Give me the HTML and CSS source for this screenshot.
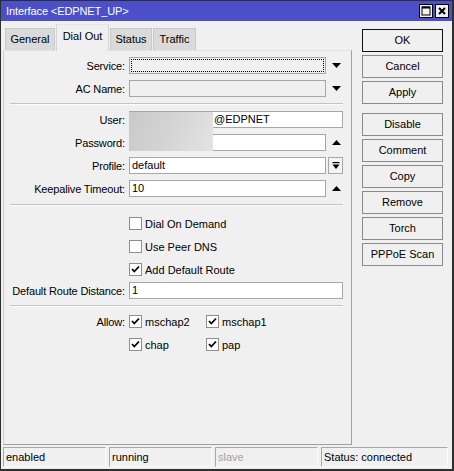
FILE: index.html
```html
<!DOCTYPE html>
<html>
<head>
<meta charset="utf-8">
<link rel="stylesheet" href="styles.css">
</head>
<body>
<div class="window">
  <div class="titlebar">
    <span class="title">Interface &lt;EDPNET_UP&gt;</span>
    <div class="tbtns">
      <span class="tbtn"><svg width="12" height="12" viewBox="0 0 12 12"><rect x="2" y="2" width="8" height="8" fill="none" stroke="#000" stroke-width="1"/><line x1="2" y1="2.5" x2="10" y2="2.5" stroke="#000" stroke-width="2"/></svg></span>
      <span class="tbtn"><svg width="12" height="12" viewBox="0 0 12 12"><path d="M3 3 L9 9 M9 3 L3 9" stroke="#000" stroke-width="2"/></svg></span>
    </div>
  </div>
  <div class="main">
    <div class="left">
      <div class="tabs">
        <div class="tab t-general">General</div>
        <div class="tab t-dial active">Dial Out</div>
        <div class="tab t-status">Status</div>
        <div class="tab t-traffic">Traffic</div>
      </div>
      <div class="panel">
        <div class="row">
          <span class="label">Service:</span>
          <div class="field"><div class="input disabled focus"></div><span class="icon"><svg width="9" height="5" viewBox="0 0 9 5"><path d="M0 0 H9 L4.5 5 Z" fill="#000"/></svg></span></div>
        </div>
        <div class="row">
          <span class="label">AC Name:</span>
          <div class="field"><div class="input disabled"></div><span class="icon"><svg width="9" height="5" viewBox="0 0 9 5"><path d="M0 0 H9 L4.5 5 Z" fill="#000"/></svg></span></div>
        </div>
        <div class="sep"></div>
        <div class="row">
          <span class="label">User:</span>
          <div class="field"><div class="input"><span class="hidden-part"></span>@EDPNET</div></div>
        </div>
        <div class="row">
          <span class="label">Password:</span>
          <div class="field"><div class="input"></div><span class="icon"><svg width="9" height="5" viewBox="0 0 9 5"><path d="M0 5 H9 L4.5 0 Z" fill="#000"/></svg></span></div>
        </div>
        <div class="row">
          <span class="label">Profile:</span>
          <div class="field"><div class="input">default</div><span class="icon"><span class="dropbtn"><svg width="8" height="8" viewBox="0 0 8 8"><rect x="0.5" y="0" width="7" height="1.2" fill="#000"/><path d="M0.5 2.5 H7.5 L4 7 Z" fill="#000"/></svg></span></span></div>
        </div>
        <div class="row">
          <span class="label">Keepalive Timeout:</span>
          <div class="field"><div class="input">10</div><span class="icon"><svg width="9" height="5" viewBox="0 0 9 5"><path d="M0 5 H9 L4.5 0 Z" fill="#000"/></svg></span></div>
        </div>
        <div class="sep sep-b"></div>
        <div class="row">
          <span class="label"></span>
          <label class="check"><span class="box"></span>Dial On Demand</label>
        </div>
        <div class="row">
          <span class="label"></span>
          <label class="check"><span class="box"></span>Use Peer DNS</label>
        </div>
        <div class="row">
          <span class="label"></span>
          <label class="check"><span class="box"><svg width="11" height="11" viewBox="0 0 11 11"><path d="M2 5 L4.3 7.5 L9 2.5" fill="none" stroke="#000" stroke-width="1.8"/></svg></span>Add Default Route</label>
        </div>
        <div class="row row-tight">
          <span class="label">Default Route Distance:</span>
          <div class="field"><div class="input">1</div></div>
        </div>
        <div class="sep"></div>
        <div class="row">
          <span class="label">Allow:</span>
          <div class="checks">
            <label class="check"><span class="box"><svg width="11" height="11" viewBox="0 0 11 11"><path d="M2 5 L4.3 7.5 L9 2.5" fill="none" stroke="#000" stroke-width="1.8"/></svg></span>mschap2</label>
            <label class="check"><span class="box"><svg width="11" height="11" viewBox="0 0 11 11"><path d="M2 5 L4.3 7.5 L9 2.5" fill="none" stroke="#000" stroke-width="1.8"/></svg></span>mschap1</label>
          </div>
        </div>
        <div class="row">
          <span class="label"></span>
          <div class="checks">
            <label class="check"><span class="box"><svg width="11" height="11" viewBox="0 0 11 11"><path d="M2 5 L4.3 7.5 L9 2.5" fill="none" stroke="#000" stroke-width="1.8"/></svg></span>chap</label>
            <label class="check"><span class="box"><svg width="11" height="11" viewBox="0 0 11 11"><path d="M2 5 L4.3 7.5 L9 2.5" fill="none" stroke="#000" stroke-width="1.8"/></svg></span>pap</label>
          </div>
        </div>
        <div class="blur"></div>
      </div>
    </div>
    <div class="buttons">
      <div class="btn default">OK</div>
      <div class="btn">Cancel</div>
      <div class="btn">Apply</div>
      <div class="btn gap">Disable</div>
      <div class="btn">Comment</div>
      <div class="btn">Copy</div>
      <div class="btn">Remove</div>
      <div class="btn">Torch</div>
      <div class="btn">PPPoE Scan</div>
    </div>
  </div>
  <div class="statusbar">
    <div class="cell">enabled</div>
    <div class="cell">running</div>
    <div class="cell grey">slave</div>
    <div class="cell wide">Status: connected</div>
  </div>
</div>
</body>
</html>
```
FILE: styles.css
```css
* { box-sizing: border-box; }
html, body { margin: 0; padding: 0; background: #f0f0f0; }
body {
  font-family: "Liberation Sans", Arial, sans-serif;
  font-size: 11px;
  color: #000;
}
.window {
  width: 454px;
  height: 471px;
  border: 1px solid #2e2e2e;
  border-right-width: 2px;
  border-bottom-width: 2px;
  background: #f0f0f0;
  display: flex;
  flex-direction: column;
}
.titlebar {
  height: 20px;
  background: #4b50c9;
  color: #fff;
  display: flex;
  align-items: center;
  justify-content: space-between;
  padding: 0 3px 0 5px;
}
.title { font-size: 11px; letter-spacing: -0.1px; }
.tbtns { display: flex; gap: 2px; }
.tbtn {
  width: 14px;
  height: 14px;
  background: #f0f0f0;
  border: 1px solid #000;
  display: flex;
  align-items: center;
  justify-content: center;
}
.tbtn svg { display: block; }
.main {
  display: flex;
  padding-left: 2px;
  height: 424px;
}
.left {
  width: 349px;
  display: flex;
  flex-direction: column;
  padding-top: 3px;
}
.tabs {
  display: flex;
  align-items: flex-end;
  height: 26px;
  padding-left: 2px;
  position: relative;
  z-index: 1;
}
.tab {
  height: 22px;
  line-height: 21px;
  text-align: center;
  background: #dadada;
  border: 1px solid #c9c9c9;
  border-bottom: none;
  white-space: nowrap;
}
.tab + .tab { margin-left: 1px; }
.t-general { width: 50px; }
.t-dial { width: 53px; }
.t-status { width: 42px; }
.t-traffic { width: 43px; }
.tab.active {
  height: 27px;
  line-height: 22px;
  background: #f0f0f0;
  border-color: #d4d4d4;
  border-top-color: #e4e4e4;
  margin-bottom: -1px;
}
.panel {
  position: relative;
  height: 395px;
  border: 1px solid #d0d0d0;
  border-right-color: #a0a0a0;
  border-bottom-color: #a0a0a0;
  border-top-color: #e2e2e2;
  padding: 6px 8px 0 6px;
  display: flex;
  flex-direction: column;
  gap: 6px;
}
.row {
  display: grid;
  grid-template-columns: 115px 214px;
  column-gap: 4px;
  height: 17px;
  align-items: center;
}
.row-tight { margin-top: -2px; }
.label { text-align: right; white-space: nowrap; letter-spacing: -0.15px; }
.field { display: flex; height: 17px; }
.input {
  flex: 1;
  height: 17px;
  border: 1px solid #a7a7a7;
  background: #fff;
  padding-left: 2px;
  line-height: 15px;
  white-space: nowrap;
  position: relative;
}
.input.disabled { background: #f0f0f0; }
.input.focus::after {
  content: "";
  position: absolute;
  inset: 1px;
  border: 1px dotted #000;
}
.hidden-part { display: inline-block; width: 82px; }
.icon {
  width: 17px;
  display: flex;
  align-items: center;
  justify-content: center;
  padding-left: 3px;
}
.icon svg { display: block; }
.dropbtn {
  width: 16px;
  height: 17px;
  margin-left: -1px;
  border: 1px solid #a7a7a7;
  background: #f4f4f4;
  display: flex;
  align-items: center;
  justify-content: center;
}
.sep {
  height: 2px;
  border-top: 1px solid #c4c4c4;
  border-bottom: 1px solid #fbfbfb;
}
.sep-b { margin-top: 1px; margin-bottom: 3px; }
.check {
  display: flex;
  align-items: center;
  gap: 3px;
  white-space: nowrap;
}
.box {
  width: 13px;
  height: 13px;
  border: 1px solid #8e8e8e;
  background: #fff;
  display: flex;
  align-items: center;
  justify-content: center;
  flex: none;
}
.box svg { display: block; }
.checks {
  display: grid;
  grid-template-columns: 77px 1fr;
}
.blur {
  position: absolute;
  left: 125px;
  top: 61px;
  width: 84px;
  height: 39px;
  background: linear-gradient(110deg, #c9c9c9 0%, #d3d3d3 45%, #e3e3e3 100%);
}
.buttons {
  margin-left: 10px;
  padding-top: 8px;
  width: 81px;
  display: flex;
  flex-direction: column;
  gap: 3px;
}
.btn {
  height: 23px;
  border: 1px solid #8a8a8a;
  background: #f0f0f0;
  text-align: center;
  line-height: 21px;
}
.btn.default { border-color: #111; }
.btn.gap { margin-top: 6px; }
.statusbar {
  display: flex;
  gap: 3px;
  padding-left: 2px;
  margin-top: 2px;
  height: 20px;
}
.cell {
  width: 103px;
  height: 20px;
  border: 1px solid #fafafa;
  border-top-color: #a9a9a9;
  border-left-color: #a9a9a9;
  padding-left: 2px;
  line-height: 18px;
}
.cell.wide { width: 127px; }
.cell.grey { color: #a2a2a2; }
```
